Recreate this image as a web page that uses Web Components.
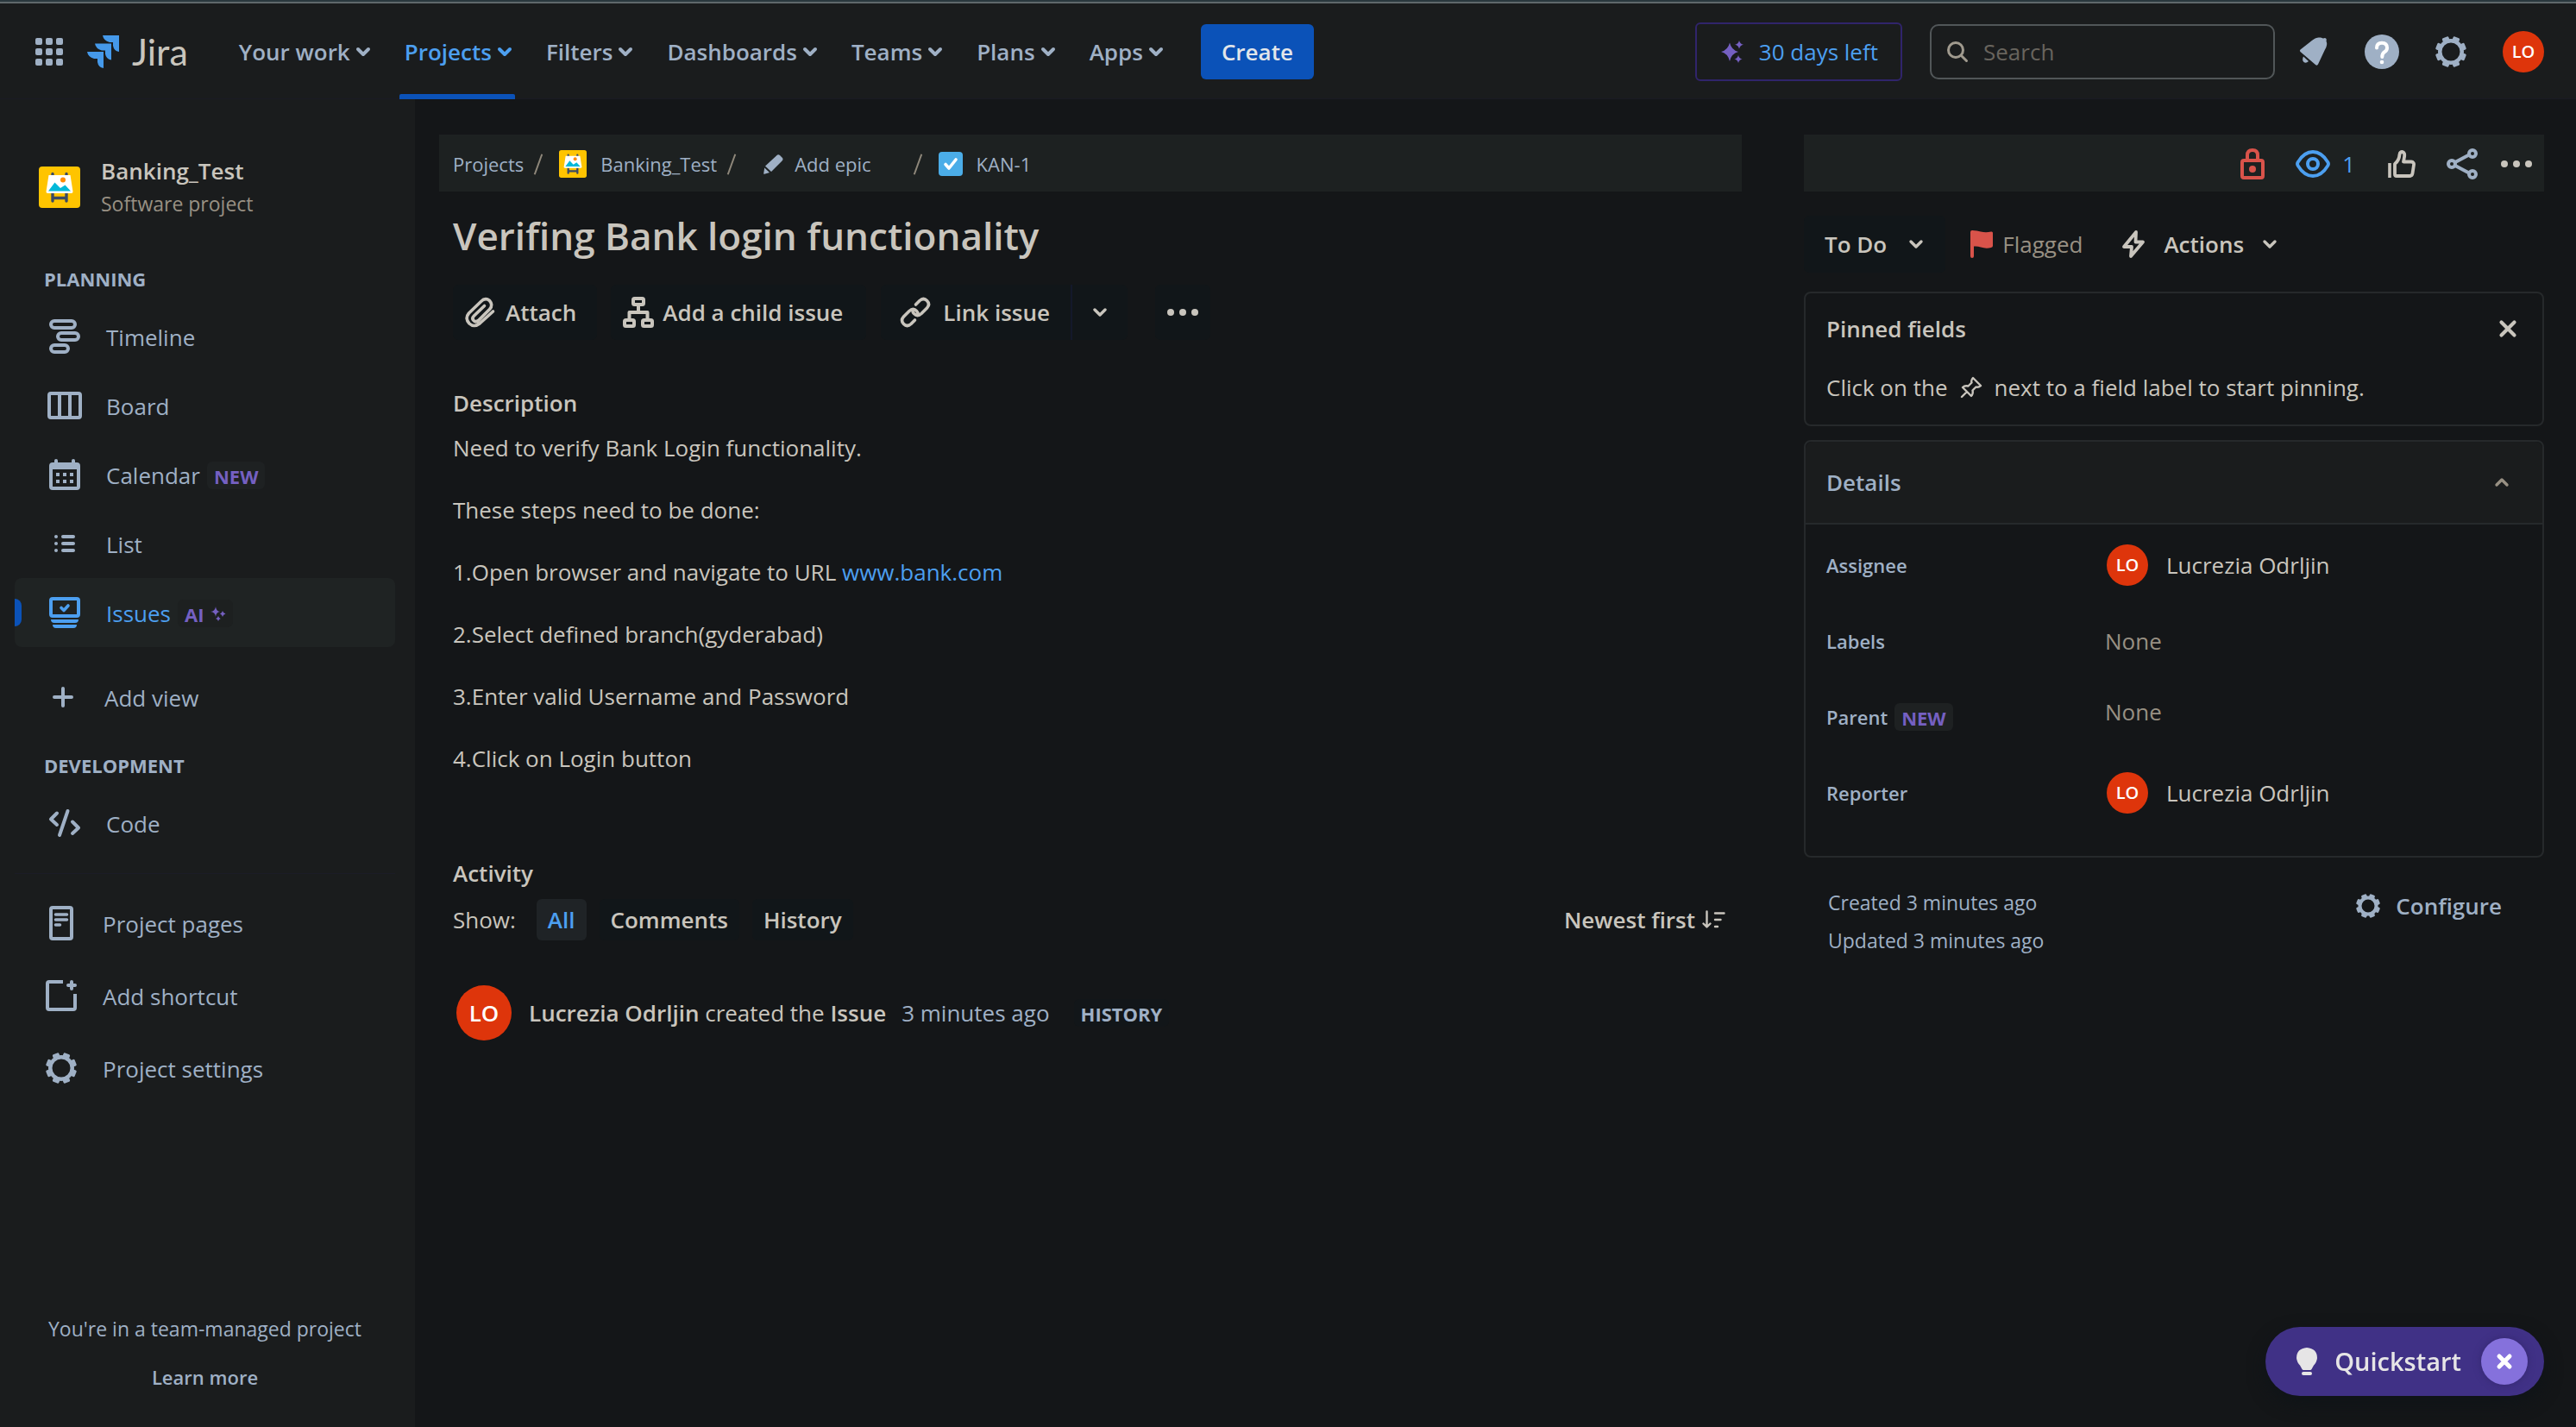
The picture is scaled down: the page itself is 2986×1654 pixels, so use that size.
<!DOCTYPE html>
<html lang="en">
<head>
<meta charset="utf-8">
<title>KAN-1 Verifing Bank login functionality - Jira</title>
<style>
  :root {
    --page: #141618;
    --raised: #1a1c1d;
    --bar: #1d2121;
    --line: #26292b;
    --text: #c9c5bd;
    --muted: #989083;
    --soft: #9fb0c5;
    --blue: #4c9ff0;
    --primary: #0b52b8;
    --purple: #7560c2;
    --red: #de350b;
    --fs-s: 22px;
    --fs-note: 23px;
    --fs-m: 26px;
  }
  html, body { margin: 0; background: var(--page); }
  body { font-family: "Open Sans", "Noto Sans", sans-serif; font-size: 26px; line-height: 48px; color: var(--text); }
</style>
</head>
<body>
<jira-app></jira-app>

<script>
const gear = (size, hole, body, tooth) => {
  const c = size / 2;
  let teeth = '';
  for (let i = 0; i < 8; i++) {
    teeth += `<rect x="${c - tooth / 2}" y="0" width="${tooth}" height="${c - body + 3}" rx="1.5" transform="rotate(${22.5 + 45 * i} ${c} ${c})"/>`;
  }
  const r = (hole + body) / 2;
  return [size, size, `<g fill="currentColor">${teeth}</g><circle cx="${c}" cy="${c}" r="${r}" fill="none" stroke="currentColor" stroke-width="${body - hole}"/>`];
};
const S = 'fill="none" stroke="currentColor" stroke-linecap="round" stroke-linejoin="round"';
const easel = `<rect width="48" height="48" rx="4" fill="#ffc400"/>
  <g stroke="#3b4a63" stroke-width="3.4" stroke-linecap="round"><path d="M16 8.5V12M32 8.5V12M16 31V40M32 31V40M16 36.5H32"/></g>
  <path d="M11.5 10h25l3 19q.2 2-1.800 2H10.300q-2 0-1.800-2z" fill="#fff"/>
  <circle cx="28" cy="15.500" r="3" fill="#ff8b00"/>
  <path d="M11 28.500 18.500 18.500 25 25 30.500 21.500 37 28.500z" fill="#00b8d9"/>`;
const ICONS = {
  apps: [32, 32, '<g fill="currentColor">' + [0, 12, 24].map(y => [0, 12, 24].map(x => `<rect x="${x}" y="${y}" width="8" height="8" rx="2"/>`).join('')).join('') + '</g>'],
  jira: [38, 38, '<g fill="#4599ea"><path d="M18 0H37V19Q31 18 30 12V8H26Q19 6 18 0Z"/><path d="M9 9.500H28V28.500Q22 27.500 21 21.500V17.500H17Q10 15.500 9 9.500Z"/><path d="M0 19H19V38Q13 37 12 31V27H8Q1 25 0 19Z"/></g>'],
  chevron: [16, 10, `<path d="M2 2 8 8 14 2" ${S} stroke-width="4"/>`],
  chevronThin: [16, 10, `<path d="M2 2 8 8 14 2" ${S} stroke-width="3.400"/>`],
  chevronUp: [16, 10, `<path d="M2 8 8 2 14 8" ${S} stroke-width="3.400"/>`],
  sparkle: [26, 26, '<g fill="currentColor"><path d="M10 2.500Q12 11 20 13 12 15 10 24 8 15 0 13 8 11 10 2.500Z"/><path d="M21 0Q22 4 26 4.700 22 5.500 21 9.500 20 5.500 16 4.700 20 4 21 0Z"/><path d="M20 17Q21 20.800 24.500 21.500 21 22.200 20 26 19 22.200 15.500 21.500 19 20.800 20 17Z"/></g>'],
  sparkleSmall: [18, 18, '<g fill="currentColor"><path d="M6 0Q6.500 5.500 11 6 6.500 6.500 6 12 5.500 6.500 0 6 5.500 5.500 6 0Z"/><path d="M14 5Q14.600 7.700 17.500 8.500 14.600 9.300 14 12 13.400 9.300 11 8.500 13.400 7.700 14 5Z"/><path d="M9 11Q9.600 13.500 12 14 9.600 14.500 9 17 8.400 14.500 6 14 8.400 13.500 9 11Z"/></g>'],
  search: [24, 24, `<circle cx="10" cy="10" r="8.500" fill="none" stroke="currentColor" stroke-width="3"/><path d="M16.500 16.500 22.500 22.500" ${S} stroke-width="3"/>`],
  bell: [34, 34, '<path d="M1.500 14.500 13 5.500C20-1 25 0 28 1.500L30 1Q32.500 1.500 31.500 4.500 33.500 9 30 14.500L22 31.500Q21 33.500 19 32L1.500 17Q.2 15.800 1.500 14.500Z" fill="currentColor"/><path d="M5 22.500 11 28Q8 31 5.500 29 3 26.500 5 22.500Z" fill="currentColor"/>'],
  help: [40, 40, '<circle cx="20" cy="20" r="20" fill="currentColor"/><path d="M14 15.500Q14 9.800 20 9.800T26 15.500Q26 18.500 23 20.300 20.300 22 20.300 26" fill="none" stroke="#fff" stroke-width="4" stroke-linecap="round"/><circle cx="20" cy="32" r="2.300" fill="#fff"/>'],
  gear: gear(36, 10.500, 15, 8),
  gearSmall: gear(28, 7.500, 11.500, 6.500),
  easel: [48, 48, easel],
  timeline: [36, 40, `<g ${S} stroke-width="4"><rect x="2" y="2" width="28" height="8" rx="4"/><rect x="10" y="16" width="24" height="8" rx="4"/><rect x="2" y="30" width="20" height="8" rx="4"/></g>`],
  board: [40, 32, `<g fill="none" stroke="currentColor" stroke-width="4"><rect x="2" y="2" width="36" height="28" rx="2"/><path d="M14 2V30M26 2V30"/></g>`],
  calendar: [36, 36, '<g fill="currentColor"><rect x="6" y="0" width="4" height="8" rx="2"/><rect x="26" y="0" width="4" height="8" rx="2"/><path fill-rule="evenodd" d="M4 4H32Q36 4 36 8V32Q36 36 32 36H4Q0 36 0 32V8Q0 4 4 4ZM4 12V32H32V12Z"/><path d="M8 16h4v4H8zM16 16h4v4h-4zM24 16h4v4h-4zM8 24h4v4H8zM16 24h4v4h-4zM24 24h4v4h-4z"/></g>'],
  list: [24, 20, '<g fill="currentColor"><circle cx="2" cy="2" r="2"/><circle cx="2" cy="10" r="2"/><circle cx="2" cy="18" r="2"/><rect x="8" y="0" width="16" height="4" rx="2"/><rect x="8" y="8" width="16" height="4" rx="2"/><rect x="8" y="16" width="16" height="4" rx="2"/></g>'],
  issues: [36, 36, `<rect x="2" y="2" width="32" height="20" rx="2" fill="none" stroke="currentColor" stroke-width="4"/><path d="M14 12.500 17 15.500 22 10" ${S} stroke-width="3.600"/><path d="M2 26H34Q34 30 30 30H6Q2 30 2 26ZM4 32H32Q32 36 28 36H8Q4 36 4 32Z" fill="currentColor"/>`],
  plus: [24, 24, `<path d="M12 2V22M2 12H22" ${S} stroke-width="4"/>`],
  code: [36, 32, `<path d="M9 4.500 2 11.500 9 18M21.500 2 12 30M27 14.500 34 21.500 27 28" ${S} stroke-width="4"/>`],
  page: [28, 40, `<rect x="2" y="2" width="24" height="36" rx="2" fill="none" stroke="currentColor" stroke-width="4"/><path d="M7.500 10H20.500M7.500 16H20.500M7.500 22H12.500" ${S} stroke-width="3.600"/>`],
  shortcut: [36, 36, `<path d="M20 2H4Q2 2 2 4V32Q2 34 4 34H32Q34 34 34 32V16" fill="none" stroke="currentColor" stroke-width="4"/><path d="M30 2V10M26 6H34" ${S} stroke-width="4"/>`],
  pencil: [23, 23, '<path d="M15 1.500Q17-.5 19 1L21.500 3.500Q23.500 5.500 21.500 7.500L9 20 2 13.500ZM1.200 15.500 7 21 1 22.800Q0 23 .2 22Z" fill="currentColor"/>'],
  task: [28, 28, `<rect width="28" height="28" rx="4" fill="#4bade8"/><path d="M8 14.500 12 19 20 9" fill="none" stroke="#fff" stroke-width="3.600" stroke-linecap="round" stroke-linejoin="round"/>`],
  clip: [36, 36, `<path d="M32.500 17 17 31Q10.500 36 5 31-.5 25 4.500 19L18.500 5.500Q23.500.5 28.500 4.500 33 9.500 28.500 14.500L15.500 27.500Q12.500 30 10 27.500 7.500 25 10.500 22L22.500 10.500" ${S} stroke-width="3.600"/>`],
  child: [36, 36, `<g ${S} stroke-width="4"><rect x="12" y="2" width="12" height="7" rx="1.500"/><rect x="2" y="27" width="11" height="7" rx="1.500"/><rect x="23" y="27" width="11" height="7" rx="1.500"/><path d="M18 9V17M7.500 27V18H28.500V27"/></g>`],
  link: [36, 36, `<g ${S} stroke-width="3.600"><path d="M18.500 9 23 4.500Q27.500.5 31.500 4.500 35.500 8.500 31.500 13L25 19.500Q20.500 23.500 16.500 19.500 15 18 14.800 15.500"/><path d="M17.500 27 13 31.500Q8.500 35.500 4.500 31.500 .5 27.500 4.500 23L11 16.500Q15.500 12.500 19.500 16.500 21 18 21.200 20.500"/></g>`],
  more: [36, 8, '<g fill="currentColor"><circle cx="4" cy="4" r="4"/><circle cx="18" cy="4" r="4"/><circle cx="32" cy="4" r="4"/></g>'],
  sort: [27, 22, `<path d="M5.500 1.500V19M1.500 15.500 5.500 19.500 9.500 15.500M15 3.500H25.500M15 11H21.500M15 19H18" ${S} stroke-width="2.400"/>`],
  lock: [28, 36, `<rect x="2" y="14" width="24" height="20" rx="2" fill="none" stroke="currentColor" stroke-width="4"/><path d="M8 14V8Q8 2 14 2T20 8V14" fill="none" stroke="currentColor" stroke-width="4"/><circle cx="14" cy="24" r="4" fill="currentColor"/>`],
  eye: [40, 32, `<path d="M20 2Q30 2 37 13.500 39 16 37 18.500 30 30 20 30T3 18.500Q1 16 3 13.500 10 2 20 2Z" fill="none" stroke="currentColor" stroke-width="3.800"/><circle cx="20" cy="16" r="6" fill="none" stroke="currentColor" stroke-width="4"/>`],
  thumb: [32, 32, `<path d="M2 15V32" fill="none" stroke="currentColor" stroke-width="3.600"/><path d="M8 16Q13 12 13.500 5 14 2 16.500 2 20 2.500 19 8L18 13.500H27Q30.500 14 30 17L28.500 27Q28 30 25 30H10Q8 30 8 28Z" ${S} stroke-width="3.800"/>`],
  share: [36, 36, `<path d="M10 16 26 7.500M10 20 26 28.500" fill="none" stroke="currentColor" stroke-width="4"/><g fill="none" stroke="currentColor" stroke-width="4"><circle cx="6" cy="18" r="4"/><circle cx="30" cy="6" r="4"/><circle cx="30" cy="30" r="4"/></g>`],
  flag: [26, 32, '<path d="M0 2Q0 0 2 0 8 0 12 1.500 18 3 24 1.500 26 1 26 3V18Q26 19.500 24 20 18 21.500 12 19.500 8 18 4 18.500V30Q4 32 2 32T0 30Z" fill="#d9534a"/>'],
  bolt: [26, 32, `<path d="M16 2 2 19H11L10 30 24 13.500H15.500Z" ${S} stroke-width="3.800"/>`],
  close: [20, 20, `<path d="M2.500 2.500 17.500 17.500M17.500 2.500 2.500 17.500" ${S} stroke-width="4.200"/>`],
  closeBold: [18, 18, `<path d="M3 3 15 15M15 3 3 15" ${S} stroke-width="5"/>`],
  pin: [26, 26, `<path d="M15 2 24 11Q21 13.500 18.500 12.500L14.500 16.500Q15.500 20.500 13 23L3 13Q5.500 10.500 9.500 11.500L13.500 7.500Q12.500 4.500 15 2ZM8 18 2 24" ${S} stroke-width="2.400"/>`],
  bulb: [24, 32, '<path d="M12 0Q24 1 24 12 23.500 17 20 20.500L17.500 25Q17 26 16 26H8Q7 26 6.500 25L4 20.500Q.5 17 0 12 0 1 12 0Z" fill="currentColor"/><rect x="6" y="28" width="12" height="4" rx="2" fill="currentColor"/>']
};

const BASE = `
  *, *::before, *::after { box-sizing: border-box; }
  button { font: inherit; color: inherit; background: none; border: 0; padding: 0; margin: 0; cursor: pointer; display: inline-flex; align-items: center; white-space: nowrap; }
  a { color: inherit; text-decoration: none; }
  h1, h2, p, ul, dl, dd, dt { margin: 0; padding: 0; font-size: inherit; font-weight: inherit; list-style: none; }
  :host { box-sizing: border-box; }
`;
const define = (name, css, html) => {
  customElements.define(name, class extends HTMLElement {
    constructor() {
      super();
      this.attachShadow({ mode: 'open' });
    }
    connectedCallback() {
      if (this.shadowRoot.childNodes.length) return;
      const t = document.createElement('template');
      t.innerHTML = `<style>${BASE}${css}</style>${typeof html === 'function' ? html(this) : html}`;
      this.shadowRoot.append(t.content.cloneNode(true));
    }
  });
};

define('jira-icon', `:host { display: inline-flex; flex: none; } svg { display: block; overflow: visible; }`, el => {
  const [w, h, body] = ICONS[el.getAttribute('name')];
  const size = +el.getAttribute('size') || w;
  return `<svg width="${size}" height="${size * h / w}" viewBox="0 0 ${w} ${h}" aria-hidden="true">${body}</svg>`;
});

define('user-avatar', `
  :host { display: inline-flex; flex: none; width: 48px; height: 48px; border-radius: 50%; background: var(--red); color: #fff; align-items: center; justify-content: center; font-size: 20px; font-weight: 600; line-height: 24px; }
  :host([large]) { width: 64px; height: 64px; font-size: 26px; }`, `<slot></slot>`);

define('new-lozenge', `
  :host { display: inline-flex; align-items: center; gap: 8px; height: 32px; padding: 2px 8px 0; border-radius: 6px; background: #1e2122; color: var(--purple); font-size: var(--fs-s); font-weight: 700; line-height: 30px; }
  :host([plain]) { background: #1d2020; }
  :host([history]) { background: #121619; color: var(--soft); }`, `<slot></slot>`);

define('nav-menu', `
  :host { display: flex; }
  button { position: relative; padding: 0 4px 0 6px; gap: 7px; color: var(--soft); font-weight: 600; }
  :host([active]) button { color: var(--blue); }
  :host([active]) button::after { content: ""; position: absolute; left: 0; right: 0; bottom: 0; height: 6px; background: var(--primary); border-radius: 2px 2px 0 0; }`,
  `<button type="button"><slot></slot><jira-icon name="chevron"></jira-icon></button>`);

define('app-header', `
  :host { display: flex; align-items: stretch; height: 115px; padding: 0 37px 0 41px; border-top: 4px solid #5f686b; background: var(--raised); box-shadow: inset 0 -1px #1a1a24; position: relative; }
  :host::before { content: ""; position: absolute; left: 0; right: 0; top: -4px; height: 2px; background: #2a383e; }
  .brand { display: flex; align-items: center; color: var(--soft); }
  .brand a { display: flex; align-items: center; gap: 14px; margin-left: 28px; color: var(--text); font: 43px/56px Lato, sans-serif; }
  nav { display: flex; gap: 30px; margin-left: 53px; }
  .create { align-self: center; height: 64px; padding: 0 24px; margin-left: 40px; border-radius: 6px; background: var(--primary); color: #e2e6ea; font-weight: 600; }
  .tools { display: flex; align-items: center; margin-left: auto; color: var(--soft); }
  .trial { height: 68px; padding: 0 26px 0 28px; gap: 18px; border: 2px solid #30246b; border-radius: 6px; color: var(--blue); font-size: var(--fs-m); }
  .trial jira-icon { color: var(--purple); }
  label { display: flex; align-items: center; gap: 18px; width: 400px; height: 64px; margin: 0 28px 0 32px; padding: 0 18px; border: 2px solid #515658; border-radius: 10px; color: #a09a8e; }
  input { flex: 1; min-width: 0; background: none; border: 0; outline: 0; padding: 0; font: inherit; color: var(--text); }
  input::placeholder { color: #68645d; opacity: 1; }
  .icons { display: flex; align-items: center; gap: 42px; }`, `
  <div class="brand">
    <button type="button" aria-label="Switch apps"><jira-icon name="apps"></jira-icon></button>
    <a href="#"><jira-icon name="jira"></jira-icon>Jira</a>
  </div>
  <nav>
    <nav-menu>Your work</nav-menu><nav-menu active>Projects</nav-menu><nav-menu>Filters</nav-menu>
    <nav-menu>Dashboards</nav-menu><nav-menu>Teams</nav-menu><nav-menu>Plans</nav-menu><nav-menu>Apps</nav-menu>
  </nav>
  <button type="button" class="create">Create</button>
  <div class="tools">
    <button type="button" class="trial"><jira-icon name="sparkle"></jira-icon>30 days left</button>
    <label><jira-icon name="search"></jira-icon><input type="search" placeholder="Search" aria-label="Search"></label>
    <div class="icons">
      <button type="button" aria-label="Notifications"><jira-icon name="bell"></jira-icon></button>
      <button type="button" aria-label="Help"><jira-icon name="help"></jira-icon></button>
      <button type="button" aria-label="Settings"><jira-icon name="gear"></jira-icon></button>
      <button type="button" aria-label="Profile"><user-avatar>LO</user-avatar></button>
    </div>
  </div>`);

define('side-item', `
  :host { display: block; --inset: 38px; }
  :host([level="action"]) { --inset: 36px; }
  :host([level="page"]) { --inset: 34px; }
  a { display: flex; align-items: center; height: 80px; padding-left: var(--inset); border-radius: 8px; color: var(--soft); position: relative; overflow: hidden; }
  :host([level="page"]) a { height: 84px; }
  .icon { display: flex; justify-content: center; width: 40px; margin-right: 28px; }
  .label { display: flex; align-items: center; padding-top: 2px; }
  ::slotted(new-lozenge) { margin-left: 8px; }
  :host([active]) a { background: #1f2323; color: var(--blue); }
  :host([active]) a::before { content: ""; position: absolute; left: 0; top: 24px; width: 8px; height: 32px; background: var(--primary); border-radius: 0 8px 8px 0; }`,
  el => `<a href="#"><span class="icon"><jira-icon name="${el.getAttribute('icon')}"></jira-icon></span><span class="label"><slot></slot></span></a>`);

define('project-sidebar', `
  :host { display: flex; flex-direction: column; padding: 64px 23px 38px 17px; background: var(--raised); color: var(--soft); }
  .project { display: flex; align-items: center; gap: 24px; padding-left: 28px; margin-bottom: 56px; line-height: 38px; }
  .project b { display: block; color: var(--text); font-weight: 600; }
  .project span { display: block; color: var(--muted); font-size: var(--fs-note); }
  h2 { padding-left: 34px; margin-bottom: 15px; font-size: var(--fs-s); line-height: 24px; font-weight: 700; }
  .add { margin: 18px 0 27px; }
  .pages { margin-top: 18px; padding-top: 15px; border-top: 1px solid #1b1c26; }
  .foot { margin-top: auto; display: flex; flex-direction: column; align-items: center; gap: 16px; font-size: var(--fs-note); line-height: 40px; }
  .foot a { font-size: var(--fs-s); font-weight: 600; }`, `
  <div class="project"><jira-icon name="easel"></jira-icon><div><b>Banking_Test</b><span>Software project</span></div></div>
  <h2>PLANNING</h2>
  <side-item icon="timeline">Timeline</side-item>
  <side-item icon="board">Board</side-item>
  <side-item icon="calendar">Calendar<new-lozenge>NEW</new-lozenge></side-item>
  <side-item icon="list">List</side-item>
  <side-item icon="issues" active>Issues<new-lozenge plain>AI<jira-icon name="sparkleSmall"></jira-icon></new-lozenge></side-item>
  <side-item class="add" icon="plus" level="action">Add view</side-item>
  <h2>DEVELOPMENT</h2>
  <side-item icon="code">Code</side-item>
  <div class="pages">
    <side-item icon="page" level="page">Project pages</side-item>
    <side-item icon="shortcut" level="page">Add shortcut</side-item>
    <side-item icon="gear" level="page">Project settings</side-item>
  </div>
  <div class="foot"><span>You're in a team-managed project</span><a href="#">Learn more</a></div>`);

define('issue-crumbs', `
  :host { display: flex; align-items: center; height: 66px; padding: 2px 16px 0; background: var(--bar); color: var(--soft); font-size: var(--fs-s); }
  a, button { display: flex; align-items: center; gap: 16px; }
  button { padding: 0 37px 0 13px; gap: 13px; }
  i { margin: 0 19px 0 12px; color: #8f887b; }
  i::before { content: ""; display: block; width: 2px; height: 25px; margin: 0 4px; background: currentColor; transform: rotate(20deg); }`, `
  <a href="#">Projects</a><i></i>
  <a href="#"><jira-icon name="easel" size="32"></jira-icon>Banking_Test</a><i></i>
  <button type="button"><jira-icon name="pencil"></jira-icon>Add epic</button><i></i>
  <a href="#"><jira-icon name="task"></jira-icon>KAN-1</a>`);

define('issue-toolbar', `
  :host { display: flex; }
  button { height: 64px; padding: 0 24px 0 14px; gap: 11px; background: #111619; border-radius: 6px; font-weight: 600; }
  .child { margin-left: 16px; padding-right: 27px; gap: 10px; }
  .link { margin-left: 17px; padding: 0 24px 0 22px; gap: 14px; border-radius: 6px 0 0 6px; border-right: 2px solid #14192b; }
  .drop { padding: 0 24px; border-radius: 0 6px 6px 0; }
  .more { margin-left: 32px; padding: 0 14px; }`, `
  <button type="button"><jira-icon name="clip"></jira-icon>Attach</button>
  <button type="button" class="child"><jira-icon name="child"></jira-icon>Add a child issue</button>
  <button type="button" class="link"><jira-icon name="link"></jira-icon>Link issue</button>
  <button type="button" class="drop" aria-label="More link options"><jira-icon name="chevronThin"></jira-icon></button>
  <button type="button" class="more" aria-label="More actions"><jira-icon name="more"></jira-icon></button>`);

define('issue-activity', `
  :host { display: block; }
  h2 { font-weight: 600; margin-bottom: 6px; }
  .row { display: flex; align-items: center; margin-bottom: 52px; padding-right: 19px; }
  .row button { height: 48px; padding: 0 13px; border-radius: 6px; background: #111619; font-weight: 600; }
  .row .on { background: #1f2326; color: var(--blue); }
  .tabs { display: flex; gap: 15px; margin-left: 24px; }
  .row .sort { margin-left: auto; gap: 8px; padding: 0; background: none; }
  .item { display: flex; align-items: center; padding-left: 4px; }
  .item p { margin: 0 18px 0 20px; }
  b { font-weight: 600; }
  time { margin-right: 28px; color: var(--soft); }`, `
  <h2>Activity</h2>
  <div class="row"><span>Show:</span>
    <div class="tabs"><button type="button" class="on">All</button><button type="button">Comments</button><button type="button">History</button></div>
    <button type="button" class="sort">Newest first<jira-icon name="sort"></jira-icon></button>
  </div>
  <div class="item"><user-avatar large>LO</user-avatar><p><b>Lucrezia Odrljin</b> created the <b>Issue</b></p><time>3 minutes ago</time><new-lozenge history>HISTORY</new-lozenge></div>`);

define('issue-main', `
  :host { display: block; min-width: 0; }
  .content { padding: 23px 0 0 16px; }
  h1 { font-size: 44px; line-height: 56px; font-weight: 600; margin-bottom: 29px; }
  h2 { font-weight: 600; margin: 49px 0 4px; }
  .text { display: flex; flex-direction: column; gap: 24px; margin-bottom: 85px; }
  .text a { color: var(--blue); }`, `
  <issue-crumbs></issue-crumbs>
  <div class="content">
    <h1>Verifing Bank login functionality</h1>
    <issue-toolbar></issue-toolbar>
    <h2>Description</h2>
    <div class="text">
      <p>Need to verify Bank Login functionality.</p>
      <p>These steps need to be done:</p>
      <p>1.Open browser and navigate to URL <a href="#">www.bank.com</a></p>
      <p>2.Select defined branch(gyderabad)</p>
      <p>3.Enter valid Username and Password</p>
      <p>4.Click on Login button</p>
    </div>
    <issue-activity></issue-activity>
  </div>`);

define('field-row', `
  :host { display: grid; grid-template-columns: 323px 1fr; align-items: center; height: 88px; }
  .label { display: flex; align-items: center; gap: 8px; color: var(--soft); font-size: var(--fs-s); font-weight: 600; }
  .value { display: flex; align-items: center; gap: 21px; }
  :host([empty]) .value { color: var(--muted); }
  :host(:not([empty])) .value { padding-left: 2px; }
  :host([raised]) .value { padding-bottom: 12px; }`,
  `<div class="label"><slot name="label"></slot></div><div class="value"><slot></slot></div>`);

define('issue-side', `
  :host { display: block; min-width: 0; }
  .actions { display: flex; align-items: center; justify-content: flex-end; height: 66px; padding: 2px 14px 0 0; background: var(--bar); }
  .actions button { margin-left: 36px; }
  .actions .watch { gap: 14px; color: var(--blue); }
  .actions .like { margin-left: 38px; }
  .actions .more { margin-left: 27px; }
  .lock { color: #d9534a; }
  .share { color: var(--soft); }
  .status { display: flex; align-items: center; margin: 28px 0 22px; font-weight: 600; height: 66px; }
  .status button { height: 66px; padding: 0 26px 0 24px; gap: 26px; background: #111619; border-radius: 6px; }
  .status span { display: flex; align-items: center; gap: 11px; margin-left: 29px; color: var(--muted); font-weight: 400; }
  .status .act { margin-left: 46px; padding: 0; background: none; gap: 22px; }
  .card { border: 2px solid var(--line); border-radius: 8px; }
  .pinned { padding: 17px 30px 19px 24px; margin-bottom: 16px; }
  .head { display: flex; align-items: center; justify-content: space-between; font-weight: 600; }
  .pinned p { display: flex; align-items: center; gap: 14px; margin-top: 20px; white-space: nowrap; }
  .details .head { height: 96px; padding: 0 39px 0 24px; background: var(--raised); border-bottom: 2px solid var(--line); border-radius: 8px 8px 0 0; color: var(--soft); }
  .details .head button { color: var(--muted); }
  .fields { padding: 3px 24px 29px; }
  .foot { display: flex; justify-content: space-between; padding: 30px 49px 0 28px; color: var(--soft); }
  .foot p { font-size: var(--fs-note); line-height: 44px; }
  .foot button { height: 48px; margin-top: 2px; gap: 18px; font-weight: 600; }`, `
  <div class="actions">
    <button type="button" class="lock" aria-label="Restrict"><jira-icon name="lock"></jira-icon></button>
    <button type="button" class="watch" aria-label="Watchers"><jira-icon name="eye"></jira-icon>1</button>
    <button type="button" class="like" aria-label="Vote"><jira-icon name="thumb"></jira-icon></button>
    <button type="button" class="share" aria-label="Share"><jira-icon name="share"></jira-icon></button>
    <button type="button" class="more" aria-label="More"><jira-icon name="more"></jira-icon></button>
  </div>
  <div class="status">
    <button type="button">To Do<jira-icon name="chevronThin"></jira-icon></button>
    <span><jira-icon name="flag"></jira-icon>Flagged</span>
    <button type="button" class="act"><jira-icon name="bolt"></jira-icon>Actions<jira-icon name="chevronThin"></jira-icon></button>
  </div>
  <div class="card pinned">
    <div class="head"><span>Pinned fields</span><button type="button" aria-label="Close"><jira-icon name="close"></jira-icon></button></div>
    <p>Click on the <jira-icon name="pin"></jira-icon> next to a field label to start pinning.</p>
  </div>
  <div class="card details">
    <div class="head"><span>Details</span><button type="button" aria-label="Collapse"><jira-icon name="chevronUp"></jira-icon></button></div>
    <div class="fields">
      <field-row><span slot="label">Assignee</span><user-avatar>LO</user-avatar>Lucrezia Odrljin</field-row>
      <field-row empty><span slot="label">Labels</span>None</field-row>
      <field-row empty raised><span slot="label">Parent</span><new-lozenge slot="label">NEW</new-lozenge>None</field-row>
      <field-row><span slot="label">Reporter</span><user-avatar>LO</user-avatar>Lucrezia Odrljin</field-row>
    </div>
  </div>
  <div class="foot"><div><p>Created 3 minutes ago</p><p>Updated 3 minutes ago</p></div>
    <button type="button"><jira-icon name="gearSmall"></jira-icon>Configure</button></div>`);

define('quickstart-pill', `
  :host { position: fixed; right: 37px; bottom: 36px; display: flex; align-items: center; height: 80px; padding: 0 19px 0 36px; border-radius: 40px; background: #403186; color: #e6e5e6; box-shadow: 0 8px 20px #0f1418; }
  .open { gap: 20px; font-size: 29px; font-weight: 600; }
  .close { justify-content: center; width: 54px; height: 54px; margin-left: 23px; border-radius: 50%; background: #8571dc; color: #fff; box-shadow: 0 0 8px #34286f; }`, `
  <button type="button" class="open"><jira-icon name="bulb"></jira-icon>Quickstart</button>
  <button type="button" class="close" aria-label="Dismiss"><jira-icon name="closeBold"></jira-icon></button>`);

define('jira-app', `
  :host { display: flex; flex-direction: column; min-height: 100vh; }
  .body { flex: 1; display: grid; grid-template-columns: 481px minmax(0, 1fr); }
  main { display: grid; grid-template-columns: minmax(0, 1510fr) minmax(0, 858fr); align-items: start; gap: 72px; padding: 41px 37px 40px 28px; }`, `
  <app-header></app-header>
  <div class="body">
    <project-sidebar></project-sidebar>
    <main><issue-main></issue-main><issue-side></issue-side></main>
  </div>
  <quickstart-pill></quickstart-pill>`);
</script>
</body>
</html>
